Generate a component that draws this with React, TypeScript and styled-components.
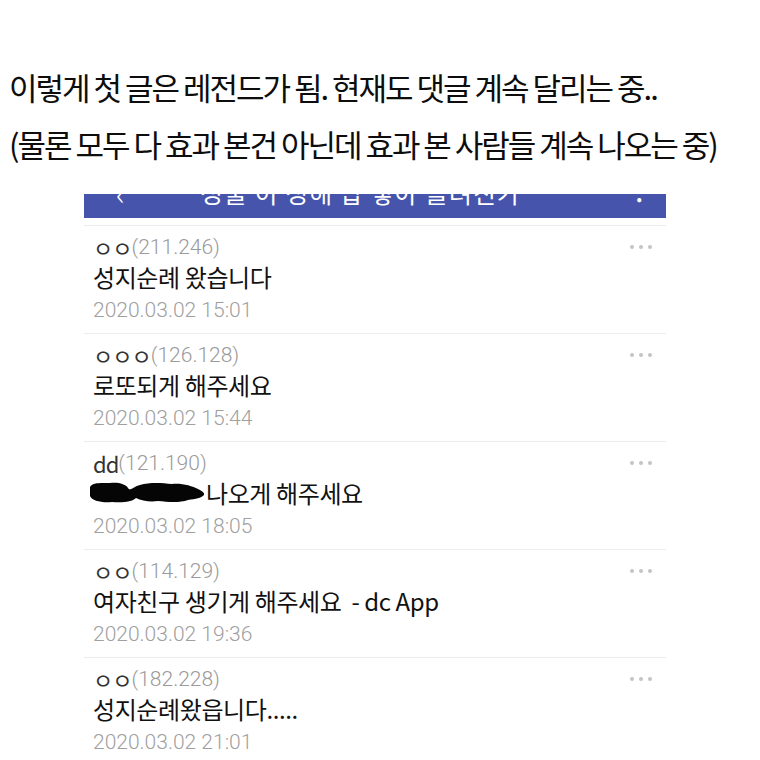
import { createGlobalStyle } from "styled-components";
import styled from "styled-components";

interface Comment {
  nick: string;
  ip: string;
  body: string;
  date: string;
  redacted?: boolean;
}

const comments: Comment[] = [
  { nick: "ㅇㅇ", ip: "(211.246)", body: "성지순례 왔습니다", date: "2020.03.02 15:01" },
  { nick: "ㅇㅇㅇ", ip: "(126.128)", body: "로또되게 해주세요", date: "2020.03.02 15:44" },
  { nick: "dd", ip: "(121.190)", body: "나오게 해주세요", date: "2020.03.02 18:05", redacted: true },
  { nick: "ㅇㅇ", ip: "(114.129)", body: "여자친구 생기게 해주세요  - dc App", date: "2020.03.02 19:36" },
  { nick: "ㅇㅇ", ip: "(182.228)", body: "성지순례왔읍니다.....", date: "2020.03.02 21:01" },
];

export default function App() {
  return (
    <>
      <GlobalStyle />
      <Page>
        <Caption>
          <Line>이렇게 첫 글은 레전드가 됨. 현재도 댓글 계속 달리는 중..</Line>
          <Line>(물론 모두 다 효과 본건 아닌데 효과 본 사람들 계속 나오는 중)</Line>
        </Caption>
        <Panel>
          <TopBar>
            <TopBarInner>
              <Back>‹</Back>
              <BarTitle>성불 이 성해 탑 쌓아 올려진가</BarTitle>
              <BarDot>•</BarDot>
            </TopBarInner>
          </TopBar>
          <List>
            {comments.map((c, i) => (
              <Row key={i}>
                <NickLine>
                  <Nick>{c.nick}</Nick>
                  <Ip>{c.ip}</Ip>
                  <More>
                    <i />
                    <i />
                    <i />
                  </More>
                </NickLine>
                <Body>
                  {c.redacted && <Scribble />}
                  {c.body}
                </Body>
                <DateText>{c.date}</DateText>
              </Row>
            ))}
          </List>
        </Panel>
      </Page>
    </>
  );
}

// marker scribble covering a name in the 3rd comment
function Scribble() {
  return (
    <Blot width="118" height="26" viewBox="0 0 118 26">
      <path
        d="M2 7 C4 2 14 3 22 3 C30 2 38 4 40 8 C42 12 46 6 52 5 C62 2 74 3 84 4 C94 3 104 6 110 9 C114 11 117 13 116 15 C113 18 108 19 100 20 C92 23 80 22 70 21 C62 22 54 21 48 18 C44 22 34 23 24 22 C14 23 4 21 2 16 Z"
        fill="#050505"
      />
    </Blot>
  );
}

const GlobalStyle = createGlobalStyle`
  html, body {
    margin: 0;
    padding: 0;
    background: #ffffff;
  }
`;

const Page = styled.div`
  width: 760px;
  height: 760px;
  overflow: hidden;
  font-family: "Noto Sans CJK KR", "Noto Sans", sans-serif;
  color: #111;
`;

const Caption = styled.div`
  padding: 58px 0 0 9px;
`;

const Line = styled.div`
  font-size: 31px;
  font-weight: 400;
  line-height: 57px;
  letter-spacing: -2px;
  white-space: nowrap;
  color: #0d0d0d;
`;

const Panel = styled.div`
  margin: 22px 0 0 84px;
  width: 582px;
`;

const TopBar = styled.div`
  height: 24px;
  background: #4654ac;
  overflow: hidden;
  color: #fff;
`;

const TopBarInner = styled.div`
  display: flex;
  align-items: center;
  height: 40px;
  margin-top: -22px;
  padding: 0 24px 0 32px;
  line-height: 40px;
`;

const Back = styled.span`
  font-size: 30px;
  font-weight: 300;
  width: 84px;
`;

const BarTitle = styled.span`
  flex: 1;
  font-size: 25px;
  letter-spacing: 1px;
  white-space: nowrap;
`;

const BarDot = styled.span`
  font-size: 16px;
  margin-top: 12px;
`;

const List = styled.div`
  padding-top: 7px;
`;

const Row = styled.div`
  border-top: 1px solid #ececec;
  padding: 7px 0 6px 9px;
`;

const NickLine = styled.div`
  display: flex;
  align-items: center;
  height: 28px;
  line-height: 28px;
  font-size: 22px;
`;

const Nick = styled.span`
  color: #333;
  letter-spacing: -1px;
`;

const Ip = styled.span`
  font-family: Roboto, "Noto Sans", sans-serif;
  font-size: 21px;
  font-weight: 300;
  color: #9a9a9a;
`;

const More = styled.span`
  margin-left: auto;
  margin-right: 14px;
  display: flex;
  gap: 5px;

  i {
    width: 4px;
    height: 4px;
    border-radius: 50%;
    background: #c4c4c4;
  }
`;

const Body = styled.div`
  display: flex;
  align-items: center;
  height: 32px;
  line-height: 32px;
  font-size: 24px;
  letter-spacing: -0.4px;
  white-space: pre;
  color: #111;
`;

const Blot = styled.svg`
  margin-left: -5px;
  flex-shrink: 0;
`;

const DateText = styled.div`
  height: 34px;
  line-height: 34px;
  font-family: Roboto, "Noto Sans", sans-serif;
  font-size: 21px;
  font-weight: 300;
  color: #a0a0a0;
`;
